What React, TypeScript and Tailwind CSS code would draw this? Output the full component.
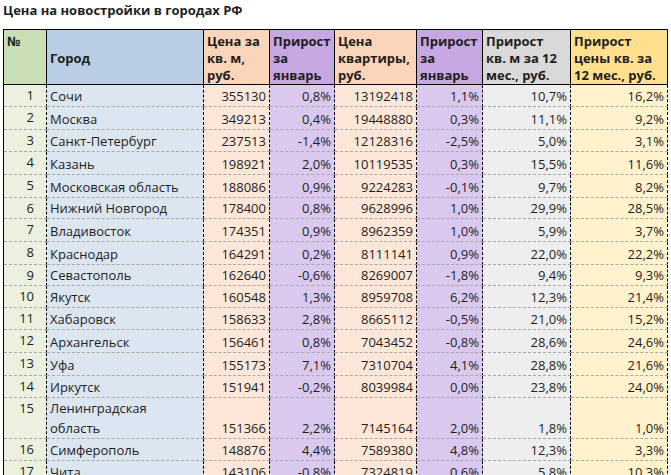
const rows: [string, string, string, string, string, string, string, string, number][] = [
  ["1", "Сочи", "355130", "0,8%", "13192418", "1,1%", "10,7%", "16,2%", 22],
  ["2", "Москва", "349213", "0,4%", "19448880", "0,3%", "11,1%", "9,2%", 23],
  ["3", "Санкт-Петербург", "237513", "-1,4%", "12128316", "-2,5%", "5,0%", "3,1%", 22],
  ["4", "Казань", "198921", "2,0%", "10119535", "0,3%", "15,5%", "11,6%", 23],
  ["5", "Московская область", "188086", "0,9%", "9224283", "-0,1%", "9,7%", "8,2%", 23],
  ["6", "Нижний Новгород", "178400", "0,8%", "9628996", "1,0%", "29,9%", "28,5%", 20],
  ["7", "Владивосток", "174351", "0,9%", "8962359", "1,0%", "5,9%", "3,7%", 23],
  ["8", "Краснодар", "164291", "0,2%", "8111141", "0,9%", "22,0%", "22,2%", 23],
  ["9", "Севастополь", "162640", "-0,6%", "8269007", "-1,8%", "9,4%", "9,3%", 21],
  ["10", "Якутск", "160548", "1,3%", "8959708", "6,2%", "12,3%", "21,4%", 22],
  ["11", "Хабаровск", "158633", "2,8%", "8665112", "-0,5%", "21,0%", "15,2%", 22],
  ["12", "Архангельск", "156461", "0,8%", "7043452", "-0,8%", "28,6%", "24,6%", 23],
  ["13", "Уфа", "155173", "7,1%", "7310704", "4,1%", "28,8%", "21,6%", 23],
  ["14", "Иркутск", "151941", "-0,2%", "8039984", "0,0%", "23,8%", "24,0%", 22],
  ["15", "Ленинградская область", "151366", "2,2%", "7145164", "2,0%", "1,8%", "1,0%", 41],
  ["16", "Симферополь", "148876", "4,4%", "7589380", "4,8%", "12,3%", "3,3%", 22],
  ["17", "Чита", "143106", "-0,8%", "7324819", "0,6%", "5,8%", "10,3%", 22],
]

const cell = "border-r border-r-black border-b border-dashed border-b-[#a8a8a8] align-bottom px-[3px]"
const head = "border-r border-black border-b align-top text-left font-bold px-[3px] pt-[3px] leading-[17px]"

export default function App() {
  return (
    <div className="h-[475px] w-[671px] overflow-hidden bg-white text-[13px] text-[#1e1e1e] [font-family:'Open_Sans',sans-serif]">
      <div className="pl-[3px] pt-[1px] h-[29px] font-bold leading-[18px]">Цена на новостройки в городах РФ</div>
      <table className="ml-[3px] border-collapse table-fixed border-l border-t border-black w-[664px]">
        <colgroup>
          <col className="w-[43px]" />
          <col className="w-[157px]" />
          <col className="w-[66px]" />
          <col className="w-[65px]" />
          <col className="w-[82px]" />
          <col className="w-[66px]" />
          <col className="w-[88px]" />
          <col className="w-[97px]" />
        </colgroup>
        <thead>
          <tr className="h-[54px]">
            <th className={`${head} bg-[#c9dfb6]`}>№</th>
            <th className={`${head} bg-[#b9cde5] !align-middle`}>Город</th>
            <th className={`${head} bg-[#fbd5b9]`}>Цена за<br />кв. м,<br />руб.</th>
            <th className={`${head} bg-[#c7a7e2]`}>Прирост<br />за<br />январь</th>
            <th className={`${head} bg-[#fbd5b9]`}>Цена<br />квартиры,<br />руб.</th>
            <th className={`${head} bg-[#c7a7e2]`}>Прирост<br />за<br />январь</th>
            <th className={`${head} bg-[#d9d9d9]`}>Прирост<br />кв. м за 12<br />мес., руб.</th>
            <th className={`${head} bg-[#ffe08f]`}>Прирост<br />цены кв. за<br />12 мес., руб.</th>
          </tr>
        </thead>
        <tbody className="leading-[20px]">
          {rows.map((r) => (
            <tr key={r[0]} style={{ height: r[8] }}>
              <td className={`${cell} bg-[#ebf1de] text-right !pr-[12px] !align-top`}>{r[0]}</td>
              <td className={`${cell} bg-[#dce6f1]`}>{r[1]}</td>
              <td className={`${cell} bg-[#fde7d8] text-right`}>{r[2]}</td>
              <td className={`${cell} bg-[#dac8ef] text-right`}>{r[3]}</td>
              <td className={`${cell} bg-[#fde7d8] text-right`}>{r[4]}</td>
              <td className={`${cell} bg-[#dac8ef] text-right`}>{r[5]}</td>
              <td className={`${cell} bg-[#eeeeee] text-right`}>{r[6]}</td>
              <td className={`${cell} bg-[#fff2cc] text-right`}>{r[7]}</td>
            </tr>
          ))}
        </tbody>
      </table>
    </div>
  )
}
